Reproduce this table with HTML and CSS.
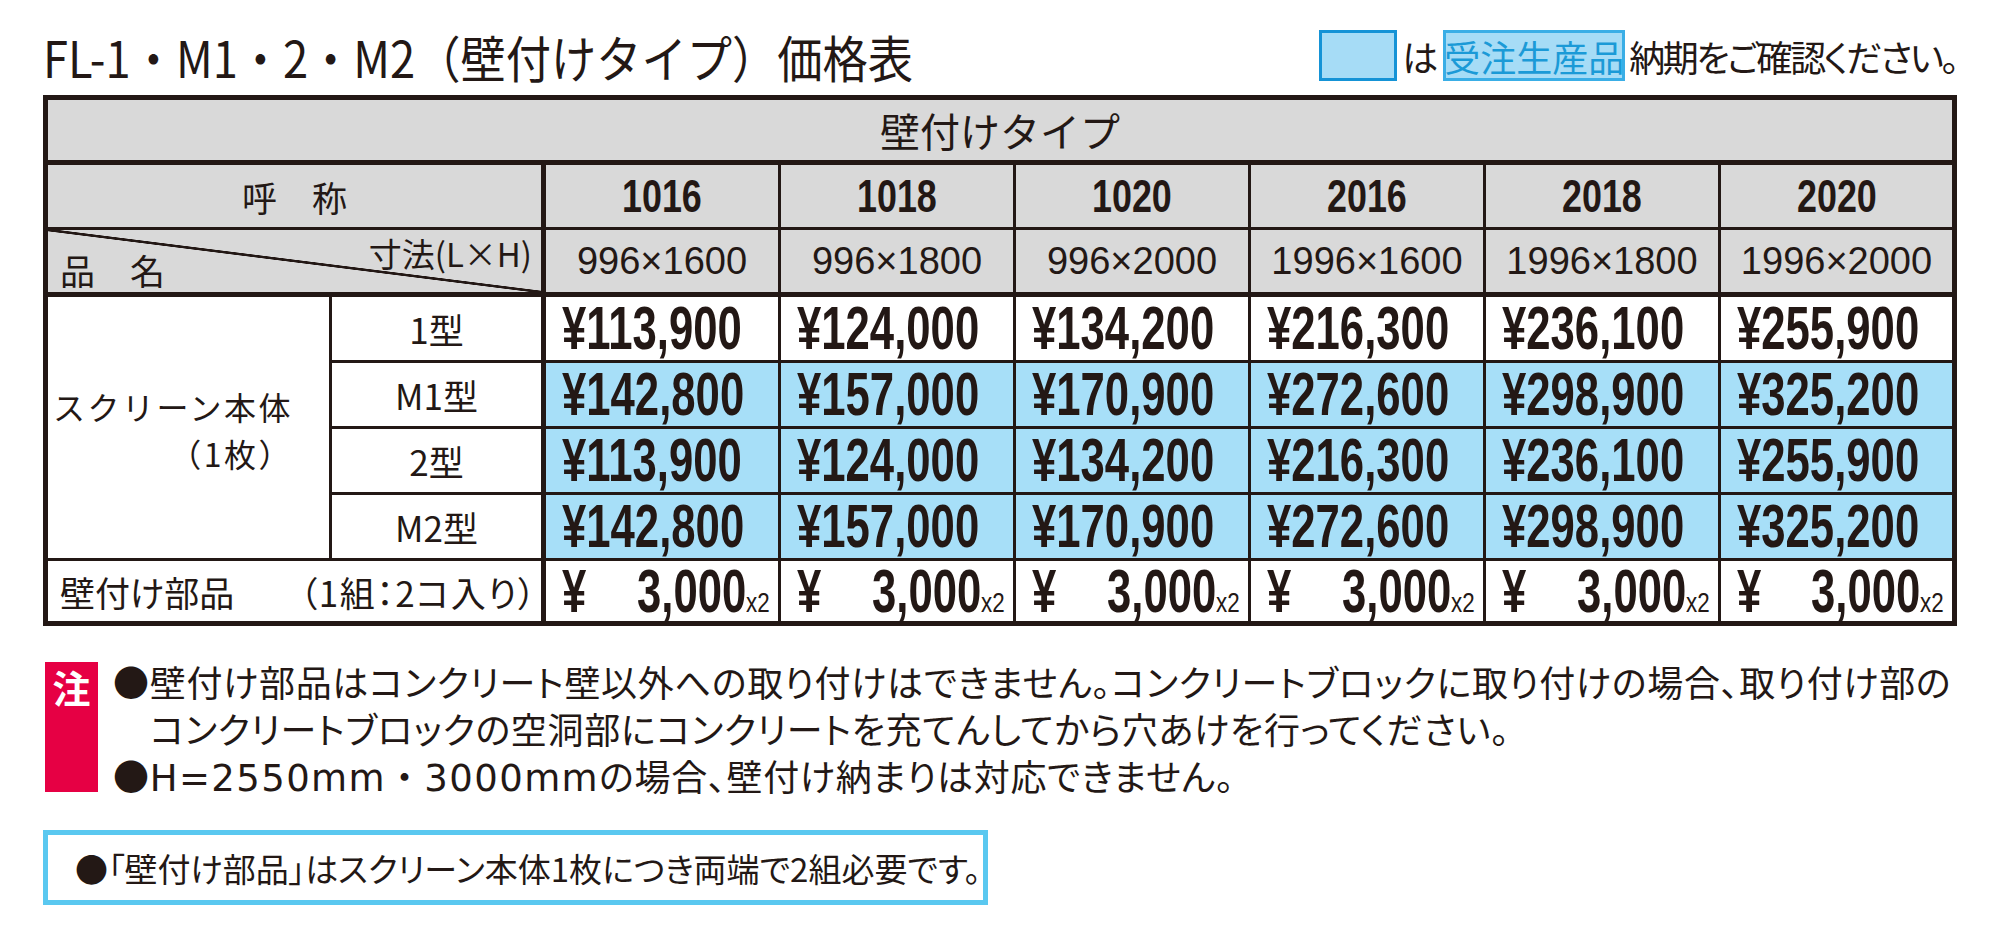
FILE: index.html
```html
<!DOCTYPE html>
<html lang="ja">
<head>
<meta charset="utf-8">
<title>FL-1・M1・2・M2（壁付けタイプ）価格表</title>
<link rel="stylesheet" href="styles.css">
</head>
<body>
<div class="page">
  <header class="top">
    <h1 class="title"><span class="title-in">FL-1・M1・2・M2（壁付けタイプ）価格表</span></h1>
    <div class="legend">
      <span class="swatch"></span>
      <span class="ha">は</span>
      <span class="made">受注生産品</span>
      <span class="lg-text">納期をご確認ください。</span>
    </div>
  </header>

  <div class="grid">
    <div class="c hd all bb5 nr type">壁付けタイプ</div>

    <div class="c hd span2 br5 jp">呼　称</div>
    <div class="c hd yr"><span class="y">1016</span></div>
    <div class="c hd yr"><span class="y">1018</span></div>
    <div class="c hd yr"><span class="y">1020</span></div>
    <div class="c hd yr"><span class="y">2016</span></div>
    <div class="c hd yr"><span class="y">2018</span></div>
    <div class="c hd yr nr"><span class="y">2020</span></div>

    <div class="c hd span2 br5 bb5 diag">
      <span class="dtop">寸法(L×H)</span>
      <span class="dbot">品　名</span>
    </div>
    <div class="c hd bb5 sz">996×1600</div>
    <div class="c hd bb5 sz">996×1800</div>
    <div class="c hd bb5 sz">996×2000</div>
    <div class="c hd bb5 sz">1996×1600</div>
    <div class="c hd bb5 sz">1996×1800</div>
    <div class="c hd bb5 sz nr">1996×2000</div>

    <div class="c rows4 body">
      <span class="b1">スクリーン本体</span>
      <span class="b2">（1枚）</span>
    </div>
    <div class="c br5 jp">1型</div>
    <div class="c pr"><span class="v">¥113,900</span></div>
    <div class="c pr"><span class="v">¥124,000</span></div>
    <div class="c pr"><span class="v">¥134,200</span></div>
    <div class="c pr"><span class="v">¥216,300</span></div>
    <div class="c pr"><span class="v">¥236,100</span></div>
    <div class="c pr nr"><span class="v">¥255,900</span></div>

    <div class="c br5 jp">M1型</div>
    <div class="c pr blue"><span class="v">¥142,800</span></div>
    <div class="c pr blue"><span class="v">¥157,000</span></div>
    <div class="c pr blue"><span class="v">¥170,900</span></div>
    <div class="c pr blue"><span class="v">¥272,600</span></div>
    <div class="c pr blue"><span class="v">¥298,900</span></div>
    <div class="c pr blue nr"><span class="v">¥325,200</span></div>

    <div class="c br5 jp">2型</div>
    <div class="c pr blue"><span class="v">¥113,900</span></div>
    <div class="c pr blue"><span class="v">¥124,000</span></div>
    <div class="c pr blue"><span class="v">¥134,200</span></div>
    <div class="c pr blue"><span class="v">¥216,300</span></div>
    <div class="c pr blue"><span class="v">¥236,100</span></div>
    <div class="c pr blue nr"><span class="v">¥255,900</span></div>

    <div class="c br5 jp">M2型</div>
    <div class="c pr blue"><span class="v">¥142,800</span></div>
    <div class="c pr blue"><span class="v">¥157,000</span></div>
    <div class="c pr blue"><span class="v">¥170,900</span></div>
    <div class="c pr blue"><span class="v">¥272,600</span></div>
    <div class="c pr blue"><span class="v">¥298,900</span></div>
    <div class="c pr blue nr"><span class="v">¥325,200</span></div>

    <div class="c span2 br5 nb parts">
      <span>壁付け部品</span>
      <span class="paren">（1組：2コ入り）</span>
    </div>
    <div class="c pr2 nb"><span class="yen">¥</span><span class="amt"><span class="n">3,000</span><span class="x2">x2</span></span></div>
    <div class="c pr2 nb"><span class="yen">¥</span><span class="amt"><span class="n">3,000</span><span class="x2">x2</span></span></div>
    <div class="c pr2 nb"><span class="yen">¥</span><span class="amt"><span class="n">3,000</span><span class="x2">x2</span></span></div>
    <div class="c pr2 nb"><span class="yen">¥</span><span class="amt"><span class="n">3,000</span><span class="x2">x2</span></span></div>
    <div class="c pr2 nb"><span class="yen">¥</span><span class="amt"><span class="n">3,000</span><span class="x2">x2</span></span></div>
    <div class="c pr2 nb nr"><span class="yen">¥</span><span class="amt"><span class="n">3,000</span><span class="x2">x2</span></span></div>
  </div>

  <section class="notes">
    <div class="chu">注</div>
    <div class="note-lines">
      <p>●壁付け部品はコンクリート壁以外への取り付けはできません。コンクリートブロックに取り付けの場合、取り付け部の</p>
      <p class="ind">コンクリートブロックの空洞部にコンクリートを充てんしてから穴あけを行ってください。</p>
      <p>●<span class="lat">H=2550mm・3000mm</span>の場合、壁付け納まりは対応できません。</p>
    </div>
  </section>

  <div class="info">●「壁付け部品」はスクリーン本体1枚につき両端で2組必要です。</div>
</div>
</body>
</html>
```

FILE: styles.css
```css
* {
  box-sizing: border-box;
  margin: 0;
  padding: 0;
}

body {
  background: #ffffff;
  color: #231815;
  font-family: "Noto Sans CJK JP", "Noto Sans", sans-serif;
}

.page {
  width: 1999px;
  padding-left: 43px;
}

/* ---------- header ---------- */
.top {
  width: 1914px;
  height: 95px;
  padding-top: 16px;
  display: flex;
  justify-content: space-between;
  align-items: center;
}

.title {
  font-size: 50px;
  font-weight: 400;
  line-height: 1;
  white-space: nowrap;
}

.title-in {
  display: inline-block;
  transform: scaleX(0.905);
  transform-origin: left center;
}

.legend {
  display: flex;
  align-items: center;
  font-size: 36px;
  line-height: 1;
  white-space: nowrap;
  font-feature-settings: "palt";
}

.swatch {
  width: 78px;
  height: 51px;
  border: 3px solid #1593d6;
  background: #a6dcf6;
  margin-right: 5px;
}

.ha {
  margin-right: 5px;
}

.made {
  width: 182px;
  height: 51px;
  border: 3px solid #3aaee6;
  background: #a6dcf6;
  color: #1b9ad7;
  display: flex;
  align-items: center;
  justify-content: center;
  margin-right: 4px;
}

.lg-text {
  letter-spacing: -2.4px;
}

/* ---------- table ---------- */
.grid {
  display: grid;
  width: 1914px;
  border: 5px solid #231815;
  grid-template-columns: 284px 214px repeat(5, 235px) 231px;
  grid-template-rows: 65px 65px 67px 66px 66px 66px 66px 60px;
}

.c {
  border-right: 3px solid #231815;
  border-bottom: 3px solid #231815;
  display: flex;
  align-items: center;
  justify-content: center;
  background: #ffffff;
  white-space: nowrap;
}

.hd { background: #d9d9d9; }
.blue { background: #a7dff8; }
.bb5 { border-bottom-width: 5px; }
.br5 { border-right-width: 5px; }
.nr { border-right: 0; }
.nb { border-bottom: 0; }

.all { grid-column: 1 / -1; }
.span2 { grid-column: span 2; }
.rows4 { grid-row: span 4; }

.type {
  font-size: 40px;
  line-height: 1;
}

.jp {
  font-size: 35px;
  line-height: 1;
}

.yr {
  font-family: "Liberation Sans", Arial, sans-serif;
  font-weight: 700;
  font-size: 46px;
  line-height: 1;
}

.y {
  display: inline-block;
  width: 80px;
  transform: scaleX(0.78);
  transform-origin: left center;
}

.sz {
  font-family: "Liberation Sans", Arial, sans-serif;
  font-size: 38px;
  line-height: 1;
}

.diag {
  display: grid;
  grid-template: 1fr / 1fr;
  padding: 7px 9px 5px 12px;
  background: linear-gradient(to top right,
    #d9d9d9 calc(50% - 1.6px),
    #231815 calc(50% - 1px),
    #231815 calc(50% + 1px),
    #d9d9d9 calc(50% + 1.6px));
  font-size: 33px;
  line-height: 1;
}

.dtop {
  grid-area: 1 / 1;
  justify-self: end;
  align-self: start;
}

.dbot {
  grid-area: 1 / 1;
  justify-self: start;
  align-self: end;
  font-size: 35px;
}

.body {
  flex-direction: column;
  align-items: flex-end;
  padding-right: 36px;
  padding-top: 4px;
  font-size: 32px;
  letter-spacing: 2.5px;
}

.b1,
.b2 {
  display: block;
  height: 47px;
  line-height: 47px;
}

.parts {
  justify-content: space-between;
  padding: 0 4px 0 12px;
  font-size: 35px;
  line-height: 1;
  font-feature-settings: "palt";
}

.paren {
  letter-spacing: 1.5px;
}

.pr {
  justify-content: flex-start;
  padding-left: 16px;
  font-family: "Liberation Sans", Arial, sans-serif;
  font-weight: 700;
  font-size: 61px;
  line-height: 1;
}

.v {
  display: inline-block;
  width: 182px;
  transform: scaleX(0.716);
  transform-origin: left center;
}

.pr2 {
  justify-content: space-between;
  padding: 0 8px 0 16px;
  font-family: "Liberation Sans", Arial, sans-serif;
  font-weight: 700;
  font-size: 61px;
  line-height: 1;
}

.yen {
  display: inline-block;
  width: 24px;
  transform: scaleX(0.716);
  transform-origin: left center;
}

.amt {
  display: flex;
  align-items: baseline;
}

.n {
  display: inline-block;
  width: 109px;
  transform: scaleX(0.716);
  transform-origin: left center;
}

.x2 {
  display: inline-block;
  width: 24px;
  font-weight: 400;
  font-size: 28px;
  transform: scaleX(0.8);
  transform-origin: left center;
}

/* ---------- notes ---------- */
.notes {
  display: flex;
  align-items: flex-start;
  margin-top: 32px;
}

.chu {
  width: 53px;
  height: 130px;
  margin: 4px 15px 0 2px;
  padding-top: 6px;
  background: #e60044;
  color: #ffffff;
  font-size: 38px;
  font-weight: 700;
  line-height: 1;
  text-align: center;
}

.note-lines {
  font-size: 36px;
  line-height: 47px;
  letter-spacing: 0.7px;
  white-space: nowrap;
  font-feature-settings: "palt";
}

.ind { padding-left: 37px; }

.lat {
  font-family: "DejaVu Sans", "Noto Sans CJK JP", sans-serif;
  font-size: 37px;
  font-feature-settings: normal;
  letter-spacing: 1.4px;
}

.info {
  width: 945px;
  height: 75px;
  margin-top: 28px;
  border: 5px solid #5ac8f0;
  padding-left: 27px;
  display: flex;
  align-items: center;
  font-size: 33px;
  white-space: nowrap;
  font-feature-settings: "palt";
}
```
